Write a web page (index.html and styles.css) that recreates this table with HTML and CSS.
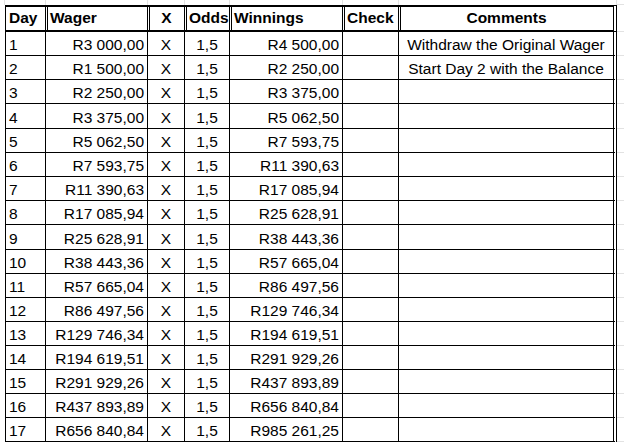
FILE: index.html
```html
<!DOCTYPE html>
<html>
<head>
<meta charset="utf-8">
<link rel="stylesheet" href="styles.css">
</head>
<body>
<table class="sheet">
  <colgroup>
    <col class="w-pad"><col class="w-day"><col class="w-wager"><col class="w-x"><col class="w-odds"><col class="w-win"><col class="w-check"><col class="w-com"><col class="w-edge">
  </colgroup>
  <tr class="strip">
    <td class="g"></td><td class="g"></td><td class="g"></td><td class="g"></td><td class="g"></td><td class="g"></td><td class="g"></td><td class="g"></td><td class="e"></td>
  </tr>
  <tr class="head">
    <td class="pad"></td>
    <th class="first l">Day</th>
    <th class="l">Wager</th>
    <th class="c">X</th>
    <th class="l">Odds</th>
    <th class="l">Winnings</th>
    <th class="l">Check</th>
    <th class="c com">Comments</th>
    <td class="e"></td>
  </tr>
  <tr><td class="pad"></td><td class="first l">1</td><td class="r">R3 000,00</td><td class="c">X</td><td class="c">1,5</td><td class="r">R4 500,00</td><td></td><td class="c com">Withdraw the Original Wager</td><td class="e"></td></tr>
  <tr><td class="pad"></td><td class="first l">2</td><td class="r">R1 500,00</td><td class="c">X</td><td class="c">1,5</td><td class="r">R2 250,00</td><td></td><td class="c com">Start Day 2 with the Balance</td><td class="e"></td></tr>
  <tr><td class="pad"></td><td class="first l">3</td><td class="r">R2 250,00</td><td class="c">X</td><td class="c">1,5</td><td class="r">R3 375,00</td><td></td><td class="com"></td><td class="e"></td></tr>
  <tr class="tall"><td class="pad"></td><td class="first l">4</td><td class="r">R3 375,00</td><td class="c">X</td><td class="c">1,5</td><td class="r">R5 062,50</td><td></td><td class="com"></td><td class="e"></td></tr>
  <tr><td class="pad"></td><td class="first l">5</td><td class="r">R5 062,50</td><td class="c">X</td><td class="c">1,5</td><td class="r">R7 593,75</td><td></td><td class="com"></td><td class="e"></td></tr>
  <tr><td class="pad"></td><td class="first l">6</td><td class="r">R7 593,75</td><td class="c">X</td><td class="c">1,5</td><td class="r">R11 390,63</td><td></td><td class="com"></td><td class="e"></td></tr>
  <tr><td class="pad"></td><td class="first l">7</td><td class="r">R11 390,63</td><td class="c">X</td><td class="c">1,5</td><td class="r">R17 085,94</td><td></td><td class="com"></td><td class="e"></td></tr>
  <tr><td class="pad"></td><td class="first l">8</td><td class="r">R17 085,94</td><td class="c">X</td><td class="c">1,5</td><td class="r">R25 628,91</td><td></td><td class="com"></td><td class="e"></td></tr>
  <tr class="tall"><td class="pad"></td><td class="first l">9</td><td class="r">R25 628,91</td><td class="c">X</td><td class="c">1,5</td><td class="r">R38 443,36</td><td></td><td class="com"></td><td class="e"></td></tr>
  <tr><td class="pad"></td><td class="first l">10</td><td class="r">R38 443,36</td><td class="c">X</td><td class="c">1,5</td><td class="r">R57 665,04</td><td></td><td class="com"></td><td class="e"></td></tr>
  <tr><td class="pad"></td><td class="first l">11</td><td class="r">R57 665,04</td><td class="c">X</td><td class="c">1,5</td><td class="r">R86 497,56</td><td></td><td class="com"></td><td class="e"></td></tr>
  <tr><td class="pad"></td><td class="first l">12</td><td class="r">R86 497,56</td><td class="c">X</td><td class="c">1,5</td><td class="r">R129 746,34</td><td></td><td class="com"></td><td class="e"></td></tr>
  <tr><td class="pad"></td><td class="first l">13</td><td class="r">R129 746,34</td><td class="c">X</td><td class="c">1,5</td><td class="r">R194 619,51</td><td></td><td class="com"></td><td class="e"></td></tr>
  <tr><td class="pad"></td><td class="first l">14</td><td class="r">R194 619,51</td><td class="c">X</td><td class="c">1,5</td><td class="r">R291 929,26</td><td></td><td class="com"></td><td class="e"></td></tr>
  <tr><td class="pad"></td><td class="first l">15</td><td class="r">R291 929,26</td><td class="c">X</td><td class="c">1,5</td><td class="r">R437 893,89</td><td></td><td class="com"></td><td class="e"></td></tr>
  <tr><td class="pad"></td><td class="first l">16</td><td class="r">R437 893,89</td><td class="c">X</td><td class="c">1,5</td><td class="r">R656 840,84</td><td></td><td class="com"></td><td class="e"></td></tr>
  <tr><td class="pad"></td><td class="first l">17</td><td class="r">R656 840,84</td><td class="c">X</td><td class="c">1,5</td><td class="r">R985 261,25</td><td></td><td class="com"></td><td class="e"></td></tr>
</table>
</body>
</html>
```

FILE: styles.css
```css
html, body {
  margin: 0;
  padding: 0;
  background: #fff;
}
.sheet {
  border-collapse: separate;
  border-spacing: 0;
  table-layout: fixed;
  width: 624px;
  font-family: "Liberation Sans", Arial, sans-serif;
  font-size: 15.5px;
  color: #000;
}
.w-pad { width: 5px; }
.w-day { width: 41px; }
.w-wager { width: 102px; }
.w-x { width: 37px; }
.w-odds { width: 45px; }
.w-win { width: 113px; }
.w-check { width: 56px; }
.w-com { width: 218px; }
.w-edge { width: 7px; }

.sheet td, .sheet th {
  box-sizing: border-box;
  padding: 0 3px 2px 3px;
  height: 24px;
  line-height: 17px;
  vertical-align: bottom;
  white-space: nowrap;
  overflow: hidden;
  border-right: 1px solid #000;
  border-bottom: 1px solid #000;
}
.sheet tr.tall td {
  height: 25px;
}
.sheet td.pad {
  border: 0;
  padding: 0;
}
.sheet td.e {
  border-right: 0;
  border-bottom: 1px solid #e2e2e2;
  padding: 0;
}
.sheet .strip td {
  height: 5px;
  padding: 0;
  border-bottom: 0;
  border-right: 1px solid #e2e2e2;
}
.sheet .strip td.e {
  border-right: 0;
  border-bottom: 1px solid #e2e2e2;
}
.sheet .first {
  border-left: 1px solid #000;
}
.sheet .head th {
  height: 27px;
  font-weight: bold;
  border-top: 2px solid #000;
  border-bottom: 2px solid #000;
  padding-bottom: 4px;
  box-shadow: inset 1px 0 0 #fff, inset 2px 0 0 #000;
  padding-left: 4px;
}
.sheet .head th.first {
  box-shadow: none;
  padding-left: 3px;
}
.sheet .com {
  border-right: 4px double #000;
}
.l { text-align: left; }
.r { text-align: right; }
.c { text-align: center; }
```
